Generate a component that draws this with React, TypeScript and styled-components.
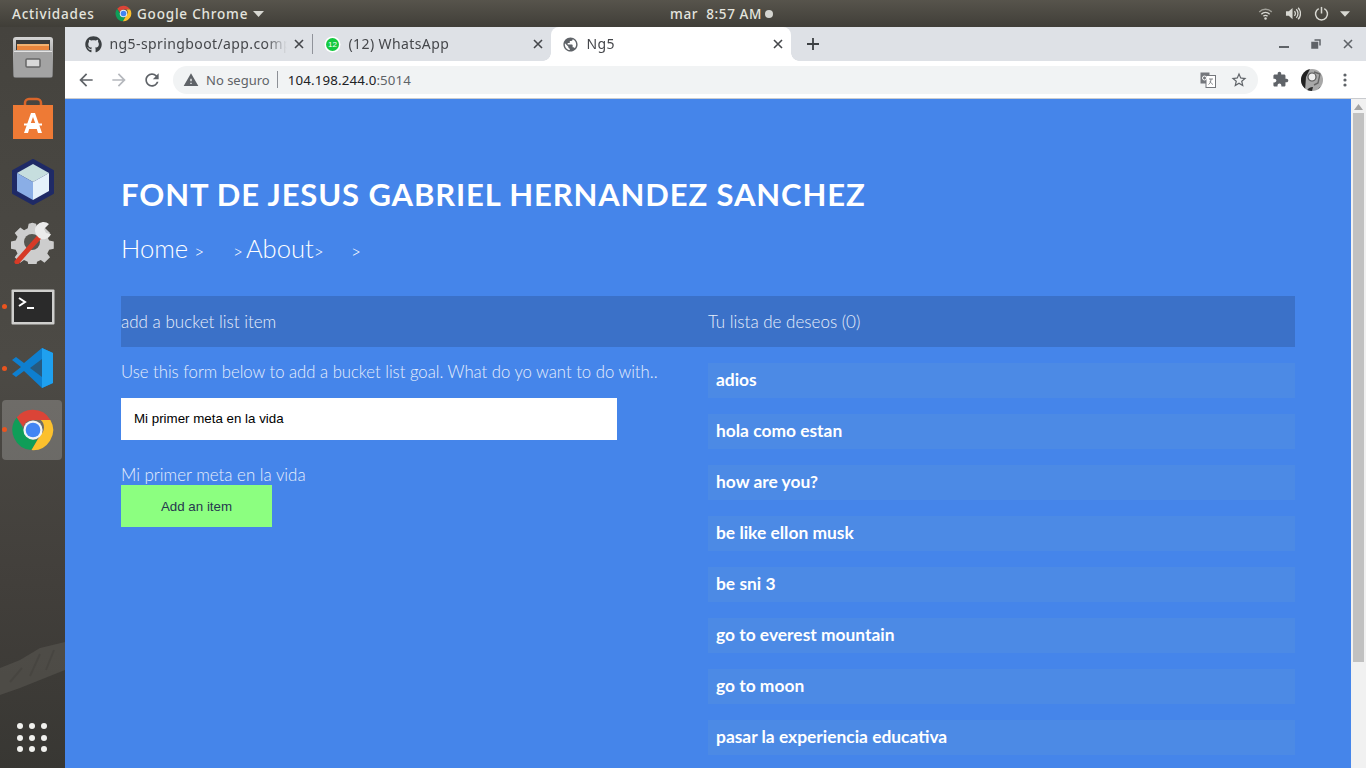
import React from "react";
import styled, { createGlobalStyle } from "styled-components";
import { FaGithub } from "react-icons/fa";

const Global = createGlobalStyle`
  html, body { margin: 0; padding: 0; height: 768px; overflow: hidden; }
  #root { height: 768px; }
  * { box-sizing: border-box; }
`;

const Screen = styled.div`
  width: 1366px; height: 768px; display: flex; flex-direction: column; overflow: hidden;
  font-family: "Noto Sans", sans-serif;
`;
const TopBar = styled.header`
  height: 27px; flex: none; display: flex; align-items: center; position: relative;
  background: linear-gradient(#57544c, #403e38); color: #e4e4de;
  font-family: "Noto Sans", sans-serif; font-size: 13.5px; font-weight: 500; letter-spacing: .8px;
`;
const Activities = styled.span` margin-left: 12px; width: 103px; `;
const AppMenu = styled.div` display: flex; align-items: center; gap: 5px; width: 150px; `;
const Clock = styled.div`
  position: absolute; left: 670px; top: 0; height: 27px; display: flex; align-items: center; gap: 3px;
  white-space: pre; letter-spacing: .6px;
`;
const Dot = styled.i` width: 8px; height: 8px; border-radius: 50%; background: #d5d5d0; display: block; `;
const Tray = styled.div`
  margin-left: auto; margin-right: 16px; display: flex; align-items: center; gap: 8px; color: #d8d8d2;
`;
const Body = styled.div` flex: 1; display: flex; min-height: 0; `;
const Dock = styled.nav`
  width: 65px; flex: none; position: relative; display: flex; flex-direction: column; padding-top: 3px; overflow: hidden;
  background: linear-gradient(#45433e, #4c4a45 45%, #423f3b 75%, #383733);
`;
const Ridge = styled.svg` position: absolute; left: 0; bottom: 71px; `;
const DockItem = styled.div<{ $active?: boolean; $running?: boolean; $lift?: number }>`
  height: 61.5px; flex: none; position: relative; display: flex; align-items: center; justify-content: center;
  padding-bottom: ${(p) => p.$lift ?? 0}px;
  &::before {
    content: ""; position: absolute; left: 2px; top: 1px; width: 60px; height: 60px; border-radius: 4px;
    background: ${(p) => (p.$active ? "rgba(255,255,255,.2)" : "transparent")};
  }
  &::after {
    content: ""; position: absolute; left: 2px; top: 28px; width: 5px; height: 5px; border-radius: 50%;
    background: ${(p) => (p.$running ? "#e9541f" : "transparent")};
  }
  svg { position: relative; }
`;
const GridButton = styled.div`
  margin-top: auto; margin-bottom: 16px; margin-left: 17px; width: 30px;
  display: grid; grid-template-columns: repeat(3, 6px); gap: 5.5px 6px; position: relative;
  i { width: 6px; height: 6px; border-radius: 50%; background: #f1f1ee; display: block; }
`;
const Browser = styled.div` flex: 1; display: flex; flex-direction: column; min-width: 0; `;
const TabStrip = styled.div`
  height: 34px; flex: none; background: #dee1e6; display: flex; align-items: center; padding-left: 9px;
  color: #45474b; font-size: 14px;
`;
const Tab = styled.div<{ $active?: boolean; $w: number }>`
  width: ${(p) => p.$w}px; height: 34px; display: flex; align-items: center; padding: 0 8px 0 11px; gap: 7.5px; position: relative;
  background: ${(p) => (p.$active ? "#fff" : "transparent")};
  border-radius: 8px 8px 0 0; flex: none;
  &::before, &::after {
    content: ""; position: absolute; bottom: 0; width: 8px; height: 8px;
    display: ${(p) => (p.$active ? "block" : "none")};
  }
  &::before { left: -8px; background: radial-gradient(circle at 0 0, transparent 7.5px, #fff 8px); }
  &::after { right: -8px; background: radial-gradient(circle at 100% 0, transparent 7.5px, #fff 8px); }
`;
const TabTitle = styled.span`
  flex: 1; white-space: nowrap; overflow: hidden; letter-spacing: .4px; line-height: 19px; padding-bottom: 1px;
  -webkit-mask-image: linear-gradient(90deg, #000 88%, transparent);
`;
const Sep = styled.i` width: 1px; height: 20px; background: #90939a; flex: none; `;
const NewTab = styled.div` margin-left: 16px; height: 34px; display: flex; align-items: center; `;
const WindowButtons = styled.div`
  margin-left: auto; height: 34px; padding-right: 13px; display: flex; align-items: center; gap: 22px;
`;
const Toolbar = styled.div`
  height: 37px; flex: none; background: #fff; display: flex; align-items: center; padding-left: 11px;
`;
const NavIcons = styled.div` display: flex; align-items: center; gap: 13px; `;
const Omnibox = styled.div`
  margin-left: 11px; width: 1085px; height: 28px; border-radius: 14px; background: #f1f3f4;
  display: flex; align-items: center; padding: 0 10px; font-size: 13px;
`;
const Insecure = styled.span` margin-left: 7px; color: #5f6368; font-size: 13px; `;
const Divider = styled.i` width: 1px; height: 17px; background: #8d9096; margin: 0 10px 0 7px; `;
const Url = styled.span` color: #202124; font-size: 13.3px; letter-spacing: .15px; b { font-weight: 400; color: #5f6368; } `;
const OmniEnd = styled.div` margin-left: auto; display: flex; align-items: center; gap: 14px; `;
const ToolEnd = styled.div` margin-left: 14px; display: flex; align-items: center; gap: 12px; `;
const Viewport = styled.div` flex: 1; display: flex; min-height: 0; border-top: 1px solid #c9cbcf; `;
const Page = styled.main`
  flex: 1; background: #4585ea; padding: 75px 56px 0; color: #fff; font-family: "Lato", sans-serif; overflow: hidden;
`;
const Title = styled.h1`
  margin: 0; font-size: 31px; line-height: 40px; font-weight: 700; letter-spacing: .87px; white-space: nowrap;
`;
const NavList = styled.ul`
  margin: 19px 0 0; padding: 0; list-style: none; display: flex; height: 30px; align-items: baseline; font-weight: 300;
`;
const NavLink = styled.li<{ $w: number }>` width: ${(p) => p.$w}px; display: flex; align-items: baseline; font-size: 25.6px; `;
const Chevron = styled.span<{ $gap?: number }>`
  font-size: 17px; margin-left: ${(p) => p.$gap ?? 0}px;
`;
const Columns = styled.div` margin-top: 33px; display: grid; grid-template-columns: 587px 587px; `;
const ColHeader = styled.div`
  height: 51px; background: #3b71c8; display: flex; align-items: center; font-size: 17px; font-weight: 300; color: #e8effb;
`;
const Left = styled.section` display: flex; flex-direction: column; align-items: flex-start; `;
const Right = styled.section` display: flex; flex-direction: column; `;
const Help = styled.p`
  margin: 15px 0 0; font-size: 16.7px; line-height: 20px; font-weight: 300; color: #e6eefc; white-space: nowrap;
`;
const GoalInput = styled.input`
  margin-top: 16px; width: 496px; height: 42px; border: 0; border-radius: 0; background: #fff; padding: 0 13px 2px; color: #000;
  font: 13.33px "Liberation Sans", sans-serif; outline: none;
`;
const Echo = styled.p`
  margin: 25px 0 0; font-size: 16.9px; line-height: 20px; font-weight: 300; color: #e6eefc; white-space: nowrap; height: 20px;
`;
const AddButton = styled.button`
  width: 151px; height: 42px; border: 0; background: #8cff80; color: #27374f; padding: 0;
  font: 13.33px "Liberation Sans", sans-serif;
`;
const Goals = styled.ul` margin: 16px 0 0; padding: 0; list-style: none; display: flex; flex-direction: column; gap: 16px; `;
const Goal = styled.li`
  height: 35px; flex: none; background: #4c8ae5; display: flex; align-items: center; padding: 0 0 2px 8px; font-size: 17.4px; font-weight: 700; color: #fff;
`;
const Scrollbar = styled.div`
  width: 15px; flex: none; background: #f1f1f1; display: flex; flex-direction: column; align-items: center;
`;
const Thumb = styled.div` width: 11px; height: 549px; background: #c1c1c1; margin-top: 3px; flex: none; `;

const MD = ({ d, size = 20, color = "#5f6368" }: { d: string; size?: number; color?: string }) => (
  <svg width={size} height={size} viewBox="0 0 24 24" fill={color}><path d={d} /></svg>
);
const Close = ({ color = "#45474b" }: { color?: string }) => (
  <svg width="10" height="10" viewBox="0 0 10 10" stroke={color} strokeWidth="1.6" fill="none"><path d="M1 1l8 8M9 1l-8 8" /></svg>
);
const ChromeLogo = ({ size }: { size: number }) => (
  <svg width={size} height={size} viewBox="0 0 48 48">
    <path fill="#db4437" d="M24 2a22 22 0 0 1 19 11H24a11 11 0 0 0-10.5 7.5L6.2 10.4A22 22 0 0 1 24 2z" />
    <path fill="#0f9d58" d="M6.2 10.4l9.5 16.4A11 11 0 0 0 29 34.3l-6.6 11.6A22 22 0 0 1 6.2 10.4z" />
    <path fill="#fbc02d" d="M43 13a22 22 0 0 1-20.6 32.9L32 29.5A11 11 0 0 0 32.5 13z" />
    <circle cx="24" cy="24" r="10.5" fill="#f1f3f4" />
    <circle cx="24" cy="24" r="8" fill="#4285f4" />
  </svg>
);
const goals = ["adios", "hola como estan", "how are you?", "be like ellon musk", "be sni 3", "go to everest mountain", "go to moon", "pasar la experiencia educativa"];

export default function App() {
  return (
    <Screen>
      <Global />
      <TopBar>
        <Activities>Actividades</Activities>
        <AppMenu>
          <ChromeLogo size={17} />
          <span>Google Chrome</span>
          <svg width="11" height="6" viewBox="0 0 11 6"><path d="M0 0h11L5.5 6z" fill="#d8d8d2" /></svg>
        </AppMenu>
        <Clock>mar  8:57 AM<Dot /></Clock>
        <Tray>
          <svg width="15" height="14" viewBox="0 0 18 16" fill="none" stroke="#d8d8d2" strokeWidth="1.6">
            <path d="M1.5 5.5a10.5 10.5 0 0 1 15 0" opacity=".6" /><path d="M4 8.2a7 7 0 0 1 10 0" /><path d="M6.5 10.7a3.5 3.5 0 0 1 5 0" /><circle cx="9" cy="13.5" r="1.5" fill="#d8d8d2" stroke="none" />
          </svg>
          <svg width="16" height="15" viewBox="0 0 17 16" fill="none" stroke="#d8d8d2" strokeWidth="1.4" style={{ marginLeft: 4 }}>
            <path d="M1 5.5h3L8 2v12l-4-3.5H1z" fill="#d8d8d2" stroke="none" /><path d="M10 5.5a3.5 3.5 0 0 1 0 5" /><path d="M12 3.5a6.5 6.5 0 0 1 0 9" /><path d="M14 1.8a9 9 0 0 1 0 12.4" />
          </svg>
          <svg width="15" height="15" viewBox="0 0 16 16" fill="none" stroke="#d8d8d2" strokeWidth="1.6" style={{ marginLeft: 5 }}>
            <path d="M5 2.8a6.4 6.4 0 1 0 6 0" /><path d="M8 1v7" />
          </svg>
          <svg width="10" height="6" viewBox="0 0 11 6" style={{ marginLeft: 3 }}><path d="M0 0h11L5.5 6z" fill="#d8d8d2" /></svg>
        </Tray>
      </TopBar>
      <Body>
        <Dock>
          <Ridge width="65" height="75" viewBox="0 0 65 75">
            <path d="M0 46L20 38 40 26 65 20V48L40 58 20 66 0 73z" fill="#5d5b56" opacity=".5" />
            <path d="M10 60l12-14M30 54l10-22M46 48l8-20" stroke="#3f3d39" strokeWidth="2" opacity=".4" />
          </Ridge>
          <DockItem $lift={6}>
            <svg width="42" height="44" viewBox="0 0 42 44">
              <defs><linearGradient id="cab" x1="0" y1="0" x2="0" y2="1"><stop offset="0" stopColor="#d4d4d4" /><stop offset="1" stopColor="#777" /></linearGradient></defs>
              <rect x="1" y="1" width="40" height="41" rx="3" fill="url(#cab)" />
              <rect x="4" y="4" width="34" height="10" fill="#3a3a3a" />
              <rect x="5" y="8" width="32" height="6" fill="#e8843c" />
              <rect x="5" y="8" width="32" height="2" fill="#f0b070" />
              <rect x="2" y="15" width="38" height="1" fill="#e4e4e4" />
              <rect x="2" y="16" width="38" height="25" fill="#a3a3a3" />
              <rect x="14" y="23" width="14" height="8" rx="1" fill="#d8d8d8" stroke="#666" strokeWidth="1.5" />
            </svg>
          </DockItem>
          <DockItem $lift={6}>
            <svg width="42" height="44" viewBox="0 0 42 44">
              <path d="M13 10V6a4 4 0 0 1 4-4h8a4 4 0 0 1 4 4v4" fill="none" stroke="#d9652a" strokeWidth="2.5" />
              <path d="M1 8h40v34H1z" fill="#ee7a35" />
              <path fillRule="evenodd" d="M19 16h4l7 20h-4l-1.2-4h-7.6L16 36h-4zM21 20l-2.2 6h4.4z" fill="#fff" />
              <path d="M12 26.5h18v2H12z" fill="#fff" />
            </svg>
          </DockItem>
          <DockItem $lift={3}>
            <svg width="44" height="48" viewBox="0 0 44 48">
              <path d="M22 2l20 11v22L22 46 2 35V13z" fill="#1f2a66" stroke="#1f2a66" strokeWidth="2" strokeLinejoin="round" />
              <path d="M22 6l16 9-16 9-16-9z" fill="#c6dede" />
              <path d="M6 15l16 9v18L6 33z" fill="#8aaee6" />
              <path d="M38 15l-16 9v18l16-9z" fill="#e4f1fb" />
            </svg>
          </DockItem>
          <DockItem $lift={6}>
            <svg width="44" height="44" viewBox="0 0 44 44">
              <path d="M22 2l4 1 1 5 4 2 4-3 6 6-3 4 2 4 5 1v8l-5 1-2 4 3 4-6 6-4-3-4 2-1 5h-8l-1-5-4-2-4 3-6-6 3-4-2-4-5-1v-8l5-1 2-4-3-4 6-6 4 3 4-2 1-5z" fill="#cdcdcd" transform="scale(.93) translate(1 1)" />
              <circle cx="21" cy="22" r="8" fill="#57554f" />
              <path d="M6 42L30 15" stroke="#d63a26" strokeWidth="5" strokeLinecap="round" />
              <path d="M27 17a8 8 0 0 1 11-13l-5 5 2 4 5 1a8 8 0 0 1-13 3z" fill="#ebebeb" />
            </svg>
          </DockItem>
          <DockItem $running>
            <svg width="44" height="36" viewBox="0 0 44 36">
              <rect x="0.5" y="0.5" width="43" height="35" rx="1" fill="#cfcfcd" />
              <rect x="3" y="3" width="38" height="30" fill="#2a2a2a" />
              <path d="M8 9l6 4-6 4" fill="none" stroke="#fff" strokeWidth="2" />
              <path d="M16 19h7" stroke="#fff" strokeWidth="2" />
            </svg>
          </DockItem>
          <DockItem $running>
            <svg width="42" height="42" viewBox="0 0 42 42">
              <path d="M30 1l11 5v30l-11 5L12 24 4 30 0 27l9-7L0 13l4-3 8 6z" fill="#0e7fd0" />
              <path d="M30 1l11 5v30l-11 5z" fill="#1fa0ef" />
              <path d="M30 12v18L18 21z" fill="#3c3c3c" opacity=".55" />
            </svg>
          </DockItem>
          <DockItem $running $active>
            <ChromeLogo size={44} />
          </DockItem>
          <GridButton>
            {Array.from({ length: 9 }, (_, i) => <i key={i} />)}
          </GridButton>
        </Dock>
        <Browser>
          <TabStrip>
            <Tab $w={238}>
              <FaGithub size={17} color="#3c4043" />
              <TabTitle>ng5-springboot/app.comp</TabTitle>
              <Close />
            </Tab>
            <Sep />
            <Tab $w={238}>
              <svg width="17" height="17" viewBox="0 0 17 17">
                <circle cx="8.5" cy="8.5" r="8" fill="#fff" />
                <circle cx="8.5" cy="8.5" r="6.5" fill="#14c93f" />
                <text x="8.5" y="11.3" textAnchor="middle" fontSize="8" fill="#fff" fontFamily="Liberation Sans">12</text>
              </svg>
              <TabTitle>(12) WhatsApp</TabTitle>
              <Close />
            </Tab>
            <Tab $w={240} $active>
              <MD size={17} d="M12 2C6.48 2 2 6.48 2 12s4.48 10 10 10 10-4.48 10-10S17.52 2 12 2zm-1 17.93c-3.95-.49-7-3.85-7-7.93 0-.62.08-1.21.21-1.79L9 15v1c0 1.1.9 2 2 2v1.93zm6.9-2.54c-.26-.81-1-1.39-1.9-1.39h-1v-3c0-.55-.45-1-1-1H8v-2h2c.55 0 1-.45 1-1V7h2c1.1 0 2-.9 2-2v-.41c2.93 1.19 5 4.06 5 7.41 0 2.08-.8 3.97-2.1 5.39z" />
              <TabTitle>Ng5</TabTitle>
              <Close />
            </Tab>
            <NewTab>
              <svg width="12" height="12" viewBox="0 0 12 12" stroke="#3c4043" strokeWidth="1.8"><path d="M6 0v12M0 6h12" /></svg>
            </NewTab>
            <WindowButtons>
              <svg width="10" height="10" viewBox="0 0 10 10"><path d="M0 7h10v2H0z" fill="#5f6368" /></svg>
              <svg width="10" height="10" viewBox="0 0 10 10" fill="none" stroke="#5f6368" strokeWidth="1.5"><rect x="1" y="3.5" width="5.5" height="5.5" fill="#5f6368" /><path d="M3.5 1h5.5v5.5" /></svg>
              <Close color="#5f6368" />
            </WindowButtons>
          </TabStrip>
          <Toolbar>
            <NavIcons>
              <MD size={20} d="M20 11H7.83l5.59-5.59L12 4l-8 8 8 8 1.41-1.41L7.83 13H20v-2z" />
              <MD size={20} color="#b5b8bd" d="M12 4l-1.41 1.41L16.17 11H4v2h12.17l-5.58 5.59L12 20l8-8z" />
              <MD size={20} d="M17.65 6.35C16.2 4.9 14.21 4 12 4c-4.42 0-7.99 3.58-7.99 8s3.57 8 7.99 8c3.73 0 6.84-2.55 7.73-6h-2.08c-.82 2.33-3.04 4-5.65 4-3.31 0-6-2.69-6-6s2.69-6 6-6c1.66 0 3.14.69 4.22 1.78L13 11h7V4l-2.35 2.35z" />
            </NavIcons>
            <Omnibox>
              <MD size={16} color="#5f6368" d="M1 21h22L12 2 1 21zm12-3h-2v-2h2v2zm0-4h-2v-4h2v4z" />
              <Insecure>No seguro</Insecure>
              <Divider />
              <Url>104.198.244.0<b>:5014</b></Url>
              <OmniEnd>
                <svg width="16" height="16" viewBox="0 0 16 16">
                  <rect x="0.5" y="0.5" width="9" height="11" fill="#74777c" />
                  <rect x="6" y="3.5" width="9.5" height="12" fill="#fff" stroke="#74777c" />
                  <path d="M9 7h4M11 7c0 3-1.5 5-2.5 5.5M10 9.5c.8 1.3 2 2.5 3 3" stroke="#74777c" strokeWidth=".9" fill="none" />
                  <circle cx="4.5" cy="6" r="2" fill="none" stroke="#fff" strokeWidth="1" />
                </svg>
                <MD size={18} color="#5f6368" d="M22 9.24l-7.19-.62L12 2 9.19 8.63 2 9.24l5.46 4.73L5.82 21 12 17.27 18.18 21l-1.63-7.03L22 9.24zM12 15.4l-3.76 2.27 1-4.28-3.32-2.88 4.38-.38L12 6.1l1.71 4.04 4.38.38-3.32 2.88 1 4.28L12 15.4z" />
              </OmniEnd>
            </Omnibox>
            <ToolEnd>
              <MD size={17} d="M20.5 11H19V7c0-1.1-.9-2-2-2h-4V3.5C13 2.12 11.88 1 10.5 1S8 2.12 8 3.5V5H4c-1.1 0-1.99.9-1.99 2v3.8H3.5c1.49 0 2.7 1.21 2.7 2.7s-1.21 2.7-2.7 2.7H2V20c0 1.1.9 2 2 2h3.8v-1.5c0-1.49 1.21-2.7 2.7-2.7 1.49 0 2.7 1.21 2.7 2.7V22H17c1.1 0 2-.9 2-2v-4h1.5c1.38 0 2.5-1.12 2.5-2.5S21.88 11 20.5 11z" />
              <svg width="22" height="22" viewBox="0 0 22 22">
                <defs><clipPath id="av"><circle cx="11" cy="11" r="11" /></clipPath></defs>
                <g clipPath="url(#av)">
                  <rect width="22" height="22" fill="#a8a8a8" />
                  <path d="M0 0h9L5 8 4 22H0z" fill="#222" />
                  <path d="M16 22c2-4 5-5 6-6v6zM6 22c1-3 3-4 6-4l-1 4z" fill="#2a2a2a" />
                  <circle cx="11" cy="8" r="4" fill="#eee" stroke="#555" strokeWidth="1.2" />
                  <path d="M13 3l6 2-2 9-4 2" fill="none" stroke="#666" strokeWidth="1.4" />
                </g>
              </svg>
              <svg width="4" height="14" viewBox="0 0 4 14" fill="#5f6368" style={{ marginLeft: 8 }}>
                <circle cx="2" cy="2" r="1.6" /><circle cx="2" cy="7" r="1.6" /><circle cx="2" cy="12" r="1.6" />
              </svg>
            </ToolEnd>
          </Toolbar>
          <Viewport>
            <Page>
              <Title>FONT DE JESUS GABRIEL HERNANDEZ SANCHEZ</Title>
              <NavList>
                <NavLink $w={112}>Home<Chevron $gap={6}>&gt;</Chevron></NavLink>
                <NavLink $w={118}><Chevron style={{ marginRight: 3 }}>&gt;</Chevron>About<Chevron>&gt;</Chevron></NavLink>
                <NavLink $w={20}><Chevron>&gt;</Chevron></NavLink>
              </NavList>
              <Columns>
                <Left>
                  <ColHeader style={{ alignSelf: "stretch" }}>add a bucket list item</ColHeader>
                  <Help>Use this form below to add a bucket list goal. What do yo want to do with..</Help>
                  <GoalInput defaultValue="Mi primer meta en la vida" />
                  <Echo>Mi primer meta en la vida</Echo>
                  <AddButton>Add an item</AddButton>
                </Left>
                <Right>
                  <ColHeader>Tu lista de deseos (0)</ColHeader>
                  <Goals>
                    {goals.map((g) => <Goal key={g}>{g}</Goal>)}
                  </Goals>
                </Right>
              </Columns>
            </Page>
            <Scrollbar>
              <svg width="9" height="6" viewBox="0 0 9 6" style={{ marginTop: 5 }}><path d="M4.5 0L9 6H0z" fill="#a3a3a3" /></svg>
              <Thumb />
            </Scrollbar>
          </Viewport>
        </Browser>
      </Body>
    </Screen>
  );
}
